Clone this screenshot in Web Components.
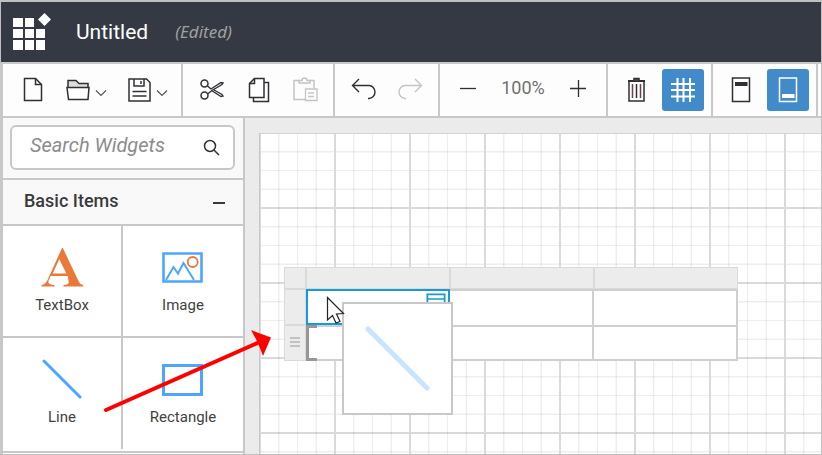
<!DOCTYPE html>
<html lang="en">
<head>
<meta charset="utf-8">
<title>Report Designer</title>
<style>
html, body { height: 100%; margin: 0; }
body { font-family: Roboto, "Liberation Sans", sans-serif; color: #3a3a3c; background: #fff; overflow: hidden; }
</style>
</head>
<body>
<designer-app></designer-app>
<script>
const define = (name, html, setup) => customElements.define(name, class extends HTMLElement {
  connectedCallback() {
    if (this.shadowRoot) return;
    const root = this.attachShadow({ mode: 'open' });
    root.innerHTML = setup ? setup(this) : html;
  }
});

const svg = (w, h, body, extra = '') =>
  `<svg width="${w}" height="${h}" viewBox="0 0 ${w} ${h}" fill="none" stroke="currentColor" stroke-width="1.5" aria-hidden="true" ${extra}>${body}</svg>`;

const chevron = svg(12, 8, '<path d="M1 1.500l5 5 5-5" stroke-width="1.200"/>', 'class="chev"');

const icons = {
  new: svg(20, 26, '<path d="M1.500 1.500h11l6 6v16h-17z"/><path d="M12.500 1.500v6h6"/>'),
  open: svg(24, 22, '<path d="M2 8.500V1.500h8l3 3h9v4" fill="#ddd"/><path d="M1 8.500h22l-1 12H2.500z" fill="#fdfdfd"/>') + chevron,
  save: svg(23, 24, '<path d="M1 1h17.500L22 4.500V23H1z"/><path d="M6 1v7h10V1M13 3v3M4.500 13.500h14M4.500 18h14"/>') + chevron,
  cut: svg(26, 22, '<g transform="translate(2)"><circle cx="4.500" cy="4.500" r="3.500"/><circle cx="4.500" cy="16.500" r="3.500"/><path d="M7.500 7l3.500 3L21 3.500l2 .5-1 1.500-10 6-4.500 3.500M11.500 11.500l9.500 6 2-.5-1-1.500-8-4.500" stroke-width="1.400"/></g>'),
  copy: svg(24, 26, '<g transform="translate(2)"><path d="M16 5.500h4.500V24.500H5.500V21"/><path d="M6.500 1.500H16V20.500H1.500V6.500z"/><path d="M6.500 1.500v5h-5"/></g>'),
  paste: svg(26, 28, '<path d="M7 4.500H2v19h11M18 4.500h4V12"/><path d="M7 7V4.500h3a2.500 2.500 0 015 0h3V7z"/><path d="M13.500 13H25v11.500H13.500zM16 17h6M16 20.500h6" stroke-width="1.300"/>'),
  undo: svg(26, 24, '<path d="M9 1L2.500 7.500 9 14M2.500 7.500H19a6 6.500 0 010 13h-1" stroke-width="1.400"/>'),
  redo: svg(26, 24, '<path d="M18 1l6.500 6.500L18 14M24.500 7.500H8a6 6.500 0 000 13h1" stroke-width="1.400"/>'),
  minus: svg(18, 20, '<path d="M1 8.500h16" stroke-width="1.300"/>'),
  plus: svg(18, 20, '<path d="M1 8.500h16M9.500 0v17" stroke-width="1.300"/>'),
  trash: svg(19, 26, '<path d="M1 4h17" stroke-width="2"/><path d="M7 3.500V1.500h5v2" fill="#555"/><path d="M2 5v19h15V5"/><path d="M5.500 7v14M13.500 7v14" stroke="#70404c"/><path d="M9.500 7v14"/>'),
  grid: svg(26, 26, '<path d="M7.500 1v24M13.500 1v24M20 1v24M1 7h24M1 13h24M1 19.500h24" stroke-width="2"/>'),
  header: svg(20, 28, '<path d="M1.500 2h17v23.500h-17z"/><path d="M4 8h12.500" stroke-width="4"/>'),
  footer: svg(20, 28, '<path d="M1.500 2h17v23.500h-17z"/><path d="M4 20h12.500" stroke-width="4"/>'),
  TextBox: svg(42, 42, '<path fill="#ea7838" stroke="none" fill-rule="evenodd" d="M21 1h.8L37.500 34q1.500 3.500 4.500 4v1.500H22.500V38q6.500-.5 5-4L26.700 29H9.700L7.500 34q-1.200 3.500 6 4v1.500H.5V38q4-.5 6-5zM18.300 12.300l-6.600 14.200h13.700z"/>'),
  Image: svg(42, 32, '<path d="M1.500 1.500h38v28h-38z" stroke="#4ea5ff" stroke-width="2.600"/><path d="M4 28l7.500-13 4.500 6.500L21.500 11 32 28" stroke="#4ea5ff" stroke-width="2"/><circle cx="30.700" cy="10" r="5" stroke="#ea7838" stroke-width="1.800"/>'),
  Line: svg(42, 42, '<path d="M3 2l36 36" stroke="#4ea5ff" stroke-width="3" stroke-linecap="round"/>'),
  Rectangle: svg(42, 32, '<path d="M1.500 1.500h38v29h-38z" stroke="#4ea5ff" stroke-width="3"/>')
};

define('title-bar', `
<style>
:host { display: flex; align-items: center; height: 60px; background: #353943; color: #fff; margin-left: 1px; border-bottom: 2px solid #c8c8c8; }
svg { margin-left: 12px; }
h1 { font-size: 21px; line-height: 28px; font-weight: 400; margin: 0 0 0 25px; }
em { font: italic 17px/28px "Noto Sans", "Open Sans", sans-serif; color: #a0a0a0; margin-left: 27px; }
</style>
<svg width="38" height="38" viewBox="0 0 38 38" fill="#fff" aria-hidden="true">
<path d="M0 5h10v9H0zM12 5h9v9h-9zM0 16h10v9H0zM12 16h9v9h-9zM23 16h9v9h-9zM0 27h10v10H0zM12 27h9v10h-9zM23 27h9v10h-9zM31.500 0l6.500 6.500-6.500 6.500L25 6.500z"/></svg>
<h1>Untitled</h1><em>(Edited)</em>`);

define('tool-group', `
<style>
:host { display: flex; align-items: center; gap: 5px; padding: 0 7px; border-right: 2px solid #c8c8c8; flex: none; }
:host([wide]) { padding: 0 3px 0 9px; }
</style><slot></slot>`);

define('tool-button', '', el => `
<style>
:host { display: block; color: #2f3034; }
:host([off]) { color: #c4c4c4; }
button { display: flex; align-items: center; justify-content: center; gap: 5px; width: 42px; height: 42px; border: 0; border-radius: 3px; padding: 0; background: none; color: inherit; }
:host([menu]) button { width: 57px; padding-right: 3px; }
:host([on]) button { background: #428bca; color: #fff; }
.chev { margin-top: 5px; color: #555; }
</style>
<button type="button" aria-label="${el.getAttribute('label')}" ${el.hasAttribute('off') ? 'disabled' : ''}>${icons[el.getAttribute('icon')]}</button>`);

define('tool-bar', `
<style>
:host { display: flex; height: 52px; background: #fdfdfd; border-left: 3px solid #c8c8c8; border-bottom: 2px solid #c8c8c8; overflow: hidden; }
output { font-size: 18px; line-height: 24px; padding-bottom: 4px; color: #707070; width: 58px; text-align: center; }
</style>
<tool-group wide><tool-button icon="new" label="New"></tool-button><tool-button menu icon="open" label="Open"></tool-button><tool-button menu icon="save" label="Save"></tool-button></tool-group>
<tool-group><tool-button icon="cut" label="Cut"></tool-button><tool-button icon="copy" label="Copy"></tool-button><tool-button off icon="paste" label="Paste"></tool-button></tool-group>
<tool-group><tool-button icon="undo" label="Undo"></tool-button><tool-button off icon="redo" label="Redo"></tool-button></tool-group>
<tool-group><tool-button icon="minus" label="Zoom out"></tool-button><output>100%</output><tool-button icon="plus" label="Zoom in"></tool-button></tool-group>
<tool-group><tool-button icon="trash" label="Delete"></tool-button><tool-button on icon="grid" label="Grid"></tool-button></tool-group>
<tool-group><tool-button icon="header" label="Header"></tool-button><tool-button on icon="footer" label="Footer"></tool-button></tool-group>`);

define('search-box', `
<style>
:host { display: block; padding: 7px 8px 8px 7px; background: #f9f9f9; border-bottom: 2px solid #c8c8c8; }
label { display: flex; align-items: center; height: 41px; border: 2px solid #c8c8c8; border-radius: 6px; background: #fff; padding: 0 13px 0 18px; color: #2f3034; }
input { flex: 1; min-width: 0; border: 0; outline: 0; padding: 0 0 6px; background: none; font: italic 400 20px/26px Roboto, sans-serif; }
input::placeholder { color: #8c8c8c; opacity: 1; }
</style>
<label><input type="text" placeholder="Search Widgets" aria-label="Search Widgets">${svg(17, 17, '<circle cx="7" cy="7" r="5.500"/><path d="M11 11l5 5"/>')}</label>`);

define('widget-tile', '', el => `
<style>
:host { display: block; background: #fff; }
button { display: flex; flex-direction: column; align-items: center; width: 100%; height: 100%; border: 0; padding: 20px 0 0; background: none; color: #3f3f42; font: 400 15px/20px Roboto, sans-serif; }
span { display: flex; height: 44px; align-items: center; margin-bottom: 5px; }
</style>
<button type="button"><span>${icons[el.getAttribute('name')]}</span>${el.getAttribute('name')}</button>`);

define('widget-panel', `
<style>
:host { display: flex; flex-direction: column; width: 240px; flex: none; background: #fff; border: solid #c8c8c8; border-width: 0 2px 0 3px; }
:host::after { content: ""; border-top: 2px solid #c8c8c8; }
h2 { margin: 0; border-bottom: 2px solid #c8c8c8; background: #f9f9f9; }
h2 button { display: flex; justify-content: space-between; align-items: center; width: 100%; height: 44px; border: 0; background: none; padding: 0 17px 2px 21px; color: #3a3a3d; font: 500 18px/24px Roboto, sans-serif; }
h2 svg { margin-top: 3px; }
section { display: grid; grid-template-columns: 118px 1fr; grid-template-rows: 110px 111px; gap: 2px; background: #c8c8c8; margin-bottom: 2px; }
</style>
<search-box></search-box>
<h2><button type="button" aria-expanded="true">Basic Items ${svg(14, 4, '<path d="M1 2h12" stroke-width="2"/>')}</button></h2>
<section>
<widget-tile name="TextBox"></widget-tile><widget-tile name="Image"></widget-tile>
<widget-tile name="Line"></widget-tile><widget-tile name="Rectangle"></widget-tile>
</section>`);

define('report-table', `
<style>
:host { display: block; width: 454px; }
table { width: 100%; table-layout: fixed; border-collapse: separate; border-spacing: 0; }
th, td { padding: 0; box-sizing: border-box; }
th { background: #ececec; border: 1px solid #dadada; }
thead th { height: 22px; }
tbody tr { height: 36px; }
td { background: #fff; border: solid #d0d0d0; border-width: 2px 2px 0 0; vertical-align: top; }
tr:last-child td { border-bottom-width: 2px; }
col:first-child { width: 22px; }
td.active { border: 2px solid #189ad6; }
td.active svg { display: block; margin: 2px 2px 0 auto; }
td.drop {
  --g: linear-gradient(#979797, #979797); --b: linear-gradient(#d0d0d0, #d0d0d0);
  border-top-color: transparent; border-bottom-color: transparent;
  background: var(--g) 0 0 / 11px 3px no-repeat border-box, var(--g) 0 100% / 11px 3px no-repeat border-box, var(--g) 0 0 / 3px 100% no-repeat border-box,
    var(--b) 0 0 / 100% 2px no-repeat border-box, var(--b) 0 100% / 100% 2px no-repeat border-box, #fff;
}
th svg { display: block; margin: -3px auto 0; }
</style>
<table aria-label="Report table"><colgroup><col><col><col><col></colgroup>
<thead><tr><th></th><th></th><th></th><th></th></tr></thead>
<tbody><tr><th></th><td class="active">${svg(20, 16, '<path d="M1 1h18v14H1z" stroke="#a9dcf2" stroke-width="2"/><path d="M1.500 1.500h17v13h-17zM2 6h16" stroke="#189ad6"/>')}</td><td></td><td></td></tr>
<tr><th>${svg(10, 10, '<path d="M0 1h10M0 5h10M0 9h10" stroke="#c2c2c2" stroke-width="2"/>')}</th><td class="drop"></td><td></td><td></td></tr></tbody></table>`);

define('drag-ghost', `
<style>
:host { display: grid; place-items: center; box-sizing: border-box; width: 111px; height: 113px; background: #fff; border: 2px solid #c8c8c8; }
</style>
${svg(66, 66, '<path d="M3 3l59 59" stroke="#c9e4ff" stroke-width="5" stroke-linecap="round"/>')}`);

define('design-canvas', `
<style>
:host { display: block; flex: 1; min-width: 0; box-sizing: border-box; padding: 15px 0 0 14px; background: #ebebeb; position: relative; }
.sheet {
  --l: #dadada; --m: rgba(0,0,0,.065); --f: rgba(0,0,0,.03);
  --lines: var(--l) 0 2px, transparent 2px 19px, var(--m) 19px 20px, var(--f) 20px 21px, transparent 21px 38px, var(--m) 38px 39px, transparent 39px 56px, var(--f) 56px 57px, var(--m) 57px 58px, transparent 58px;
  height: 100%; box-sizing: border-box; border-left: 1px solid #c8c8c8; border-top: 1px solid #d4d4d4;
  background: linear-gradient(90deg, var(--lines)) -1px 0 / 75px 75px, linear-gradient(var(--lines)) 0 -2px / 75px 75px, #fff;
}
report-table { position: absolute; left: 39px; top: 149px; }
drag-ghost { position: absolute; left: 97px; top: 184px; }
.pointer { position: absolute; left: 81px; top: 178px; }
</style>
<div class="sheet"></div>
<report-table></report-table>
<drag-ghost></drag-ghost>
<svg class="pointer" width="20" height="30" viewBox="0 0 20 30" fill="#fff" stroke="#22242c" stroke-width="1.200" aria-hidden="true"><path d="M1.500 1.500V24l5-4.500 3.500 7.500 4-1.500-3.500-7.500 7-.5z"/></svg>`);

define('designer-app', `
<style>
:host { display: flex; flex-direction: column; box-sizing: border-box; height: 100%; border: solid #c0c0c0; border-width: 2px 1px 1px 0; position: relative; background: linear-gradient(90deg, #c0c0c0 1px, #fff 1px); }
main { display: flex; flex: 1; min-height: 0; }
.arrow { position: absolute; left: 100px; top: 322px; }
</style>
<title-bar></title-bar>
<tool-bar></tool-bar>
<main><widget-panel></widget-panel><design-canvas></design-canvas></main>
<svg class="arrow" width="176" height="94" viewBox="0 0 176 94" fill="none" aria-hidden="true"><path d="M6 86L162 17" stroke="#f00" stroke-width="4" stroke-linecap="round"/><path d="M151 6l20 7.500L163 32l-5-13z" fill="#f00"/></svg>`);
</script>
</body>
</html>
